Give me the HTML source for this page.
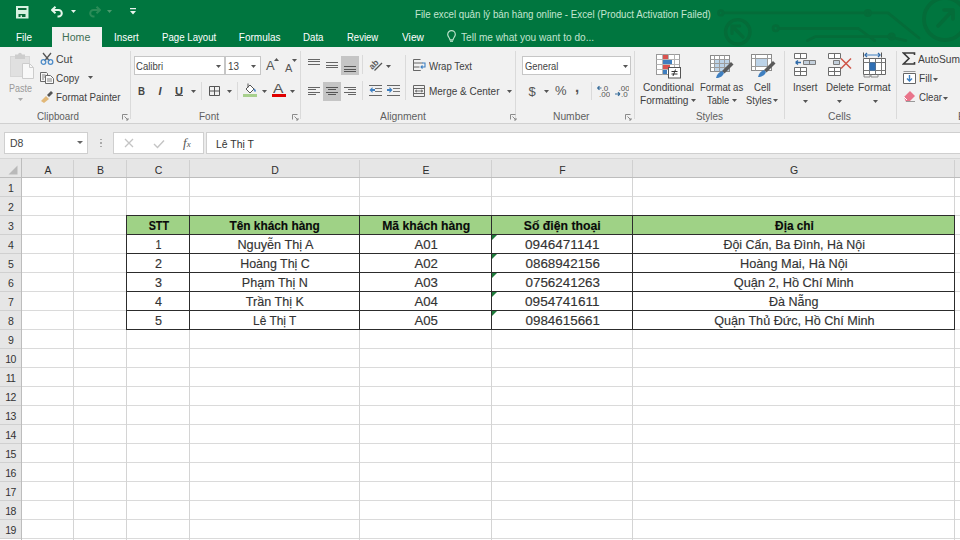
<!DOCTYPE html><html><head><meta charset="utf-8"><style>
*{box-sizing:border-box;margin:0;padding:0}
html,body{width:960px;height:540px;overflow:hidden;background:#fff;font-family:"Liberation Sans",sans-serif}
.a{position:absolute;white-space:nowrap}
#title{position:absolute;left:0;top:0;width:960px;height:47px;background:#00763f;overflow:hidden}
#ribbon{position:absolute;left:0;top:47px;width:960px;height:77px;background:#f1f1f1;border-bottom:1px solid #d0d0d0}
#gap{position:absolute;left:0;top:124px;width:960px;height:36px;background:#ebebeb}
.tab{position:absolute;top:30px;font-size:11.5px;color:#fff;white-space:nowrap}
.lbl{position:absolute;top:110px;font-size:11px;color:#666;white-space:nowrap}
.rt{position:absolute;font-size:11.5px;color:#333;white-space:nowrap}
.sep{position:absolute;top:52px;width:1px;height:68px;background:#dcdcdc}
.colh{position:absolute;top:159.5px;height:18px;font-size:10.5px;color:#2e2e2e;text-align:center;line-height:20px}
.rowh{position:absolute;left:0;width:21px;height:19px;background:#e6e6e6;font-size:10.5px;color:#333;text-align:center;line-height:21px;letter-spacing:-0.6px}
.hl{position:absolute;height:1px;background:#dadada}
.vl{position:absolute;width:1px;background:#d4d4d4}
.cell{position:absolute;height:19px;font-size:12.5px;color:#333;-webkit-text-stroke:0.15px currentColor;text-align:center;line-height:22px;white-space:nowrap}
</style></head><body>
<div id="title"></div><div id="ribbon"></div><div id="gap"></div>
<div class="a" style="left:52px;top:27px;width:50px;height:20px;background:#f1f1f1"></div>
<div class="a" style="left:16.2px;top:27.8px;height:20px;line-height:20px;font-size:10px;font-weight:normal;color:#ffffff;transform-origin:0 50%;transform:scaleX(0.992);">File</div>
<div class="a" style="left:62.2px;top:27.8px;height:20px;line-height:20px;font-size:10px;font-weight:normal;color:#3f6f55;transform-origin:0 50%;transform:scaleX(1.060);">Home</div>
<div class="a" style="left:113.5px;top:27.8px;height:20px;line-height:20px;font-size:10px;font-weight:normal;color:#ffffff;transform-origin:0 50%;transform:scaleX(0.987);">Insert</div>
<div class="a" style="left:161.5px;top:27.8px;height:20px;line-height:20px;font-size:10px;font-weight:normal;color:#ffffff;transform-origin:0 50%;transform:scaleX(0.967);">Page Layout</div>
<div class="a" style="left:238.8px;top:27.8px;height:20px;line-height:20px;font-size:10px;font-weight:normal;color:#ffffff;transform-origin:0 50%;transform:scaleX(1.000);">Formulas</div>
<div class="a" style="left:303.0px;top:27.8px;height:20px;line-height:20px;font-size:10px;font-weight:normal;color:#ffffff;transform-origin:0 50%;transform:scaleX(0.970);">Data</div>
<div class="a" style="left:347.3px;top:27.8px;height:20px;line-height:20px;font-size:10px;font-weight:normal;color:#ffffff;transform-origin:0 50%;transform:scaleX(0.951);">Review</div>
<div class="a" style="left:401.5px;top:27.8px;height:20px;line-height:20px;font-size:10px;font-weight:normal;color:#ffffff;transform-origin:0 50%;transform:scaleX(1.019);">View</div>
<div class="a" style="left:460.5px;top:27.8px;height:20px;line-height:20px;font-size:10px;font-weight:normal;color:#c0e4cf;transform-origin:0 50%;transform:scaleX(1.010);">Tell me what you want to do...</div>
<svg class="a" style="left:446px;top:29px" width="12" height="14" viewBox="0 0 12 14"><path d="M5.5 1.6a3.8 3.8 0 0 1 3.8 3.8c0 2-1.8 3.2-2.3 5.4h-3c-.5-2.2-2.3-3.4-2.3-5.4a3.8 3.8 0 0 1 3.8-3.8z" fill="none" stroke="#b9e2ca" stroke-width="1.2"/><path d="M4 12.2h3" stroke="#b9e2ca" stroke-width="1.3"/></svg>
<div class="a" style="left:414.5px;top:4.8px;height:20px;line-height:20px;font-size:10px;font-weight:normal;color:#c4e6d1;transform-origin:0 50%;transform:scaleX(0.973);">File excel quản lý bán hàng online - Excel (Product Activation Failed)</div>
<svg class="a" style="left:16px;top:6px" width="13" height="13" viewBox="0 0 13 13"><rect x="0" y="0" width="12.5" height="12.5" fill="#d8f2e2"/><rect x="2" y="2" width="8.5" height="2" fill="#0a6a3a"/><rect x="2.5" y="8" width="7" height="3" fill="#0a6a3a"/><rect x="4.5" y="9.3" width="1.5" height="1.7" fill="#d8f2e2"/></svg>
<svg class="a" style="left:50px;top:5px" width="16" height="14" viewBox="0 0 16 14"><path d="M5.5 1.8L2 5l3.5 3.2" fill="none" stroke="#e6f7ec" stroke-width="2" stroke-linejoin="round"/><path d="M2.5 5H8.5A3.3 3.3 0 0 1 8.5 11.6H7.5" fill="none" stroke="#e6f7ec" stroke-width="2"/></svg>
<svg class="a" style="left:71px;top:10px" width="5" height="3"><path d="M0 0h5L2.5 3z" fill="#e8f3ec"/></svg>
<svg class="a" style="left:86px;top:5px" width="16" height="14" viewBox="0 0 16 14"><path d="M10.5 1.8L14 5l-3.5 3.2" fill="none" stroke="#2b8c58" stroke-width="2" stroke-linejoin="round"/><path d="M13.5 5H7.5A3.3 3.3 0 0 0 7.5 11.6H8.5" fill="none" stroke="#2b8c58" stroke-width="2"/></svg>
<svg class="a" style="left:107px;top:10px" width="5" height="3"><path d="M0 0h5L2.5 3z" fill="#4d9a6e"/></svg>
<svg class="a" style="left:130px;top:8px" width="6" height="7"><path d="M0 0h6v1.2H0z M0 3h6L3 6.5z" fill="#e8f3ec"/></svg>
<svg class="a" style="left:700px;top:0" width="260" height="47" viewBox="0 0 260 47"><g fill="none" stroke="#046c39" stroke-width="2.8" stroke-linecap="round" stroke-linejoin="round">
<path d="M23 12.9H188L219 38"/><circle cx="20.8" cy="12.9" r="2.3"/><circle cx="167.9" cy="12.9" r="2.6"/>
<path d="M78.5 28.5H158.4L174.7 40.6"/><circle cx="75.7" cy="28.3" r="2.6"/>
<path d="M107.5 40.6L115.6 36.6H188.6L205.8 40.6"/><circle cx="191.6" cy="36.6" r="2.6"/>
<circle cx="37.8" cy="31.8" r="12.2" stroke-width="3.4"/><path d="M43 37L32 26M32 26v7.5M32 26h7.5" stroke-width="3.2"/>
<circle cx="245" cy="19" r="21" stroke-width="3.8"/><path d="M238 26L253 10M253 10h-9M253 10v9" stroke-width="3.6"/>
</g></svg>
<div class="a" style="left:130px;top:51px;width:1px;height:68px;background:#dadada"></div>
<div class="a" style="left:300px;top:51px;width:1px;height:68px;background:#dadada"></div>
<div class="a" style="left:515px;top:51px;width:1px;height:68px;background:#dadada"></div>
<div class="a" style="left:634px;top:51px;width:1px;height:68px;background:#dadada"></div>
<div class="a" style="left:784px;top:51px;width:1px;height:68px;background:#dadada"></div>
<div class="a" style="left:896px;top:51px;width:1px;height:68px;background:#dadada"></div>
<div class="a" style="left:37.3px;top:106.4px;height:20px;line-height:20px;font-size:11px;font-weight:normal;color:#5f5f5f;transform-origin:0 50%;transform:scaleX(0.892);">Clipboard</div>
<div class="a" style="left:199.1px;top:106.4px;height:20px;line-height:20px;font-size:11px;font-weight:normal;color:#5f5f5f;transform-origin:0 50%;transform:scaleX(0.908);">Font</div>
<div class="a" style="left:379.5px;top:106.4px;height:20px;line-height:20px;font-size:11px;font-weight:normal;color:#5f5f5f;transform-origin:0 50%;transform:scaleX(0.940);">Alignment</div>
<div class="a" style="left:552.5px;top:106.4px;height:20px;line-height:20px;font-size:11px;font-weight:normal;color:#5f5f5f;transform-origin:0 50%;transform:scaleX(0.933);">Number</div>
<div class="a" style="left:695.5px;top:106.4px;height:20px;line-height:20px;font-size:11px;font-weight:normal;color:#5f5f5f;transform-origin:0 50%;transform:scaleX(0.901);">Styles</div>
<div class="a" style="left:827.5px;top:106.4px;height:20px;line-height:20px;font-size:11px;font-weight:normal;color:#5f5f5f;transform-origin:0 50%;transform:scaleX(0.941);">Cells</div>
<div class="a" style="left:957.5px;top:106.4px;height:20px;line-height:20px;font-size:11px;font-weight:normal;color:#5f5f5f;transform-origin:0 50%;transform:scaleX(0.981);">Editing</div>
<svg class="a" style="left:121.5px;top:113.5px" width="7" height="7"><path d="M0.5 5.5V0.5H5.5" fill="none" stroke="#8a8a8a" stroke-width="1"/><path d="M2.5 2.5L6 6M4 6h2V4" fill="none" stroke="#8a8a8a" stroke-width="1"/></svg>
<svg class="a" style="left:291.5px;top:113.5px" width="7" height="7"><path d="M0.5 5.5V0.5H5.5" fill="none" stroke="#8a8a8a" stroke-width="1"/><path d="M2.5 2.5L6 6M4 6h2V4" fill="none" stroke="#8a8a8a" stroke-width="1"/></svg>
<svg class="a" style="left:509.5px;top:113.5px" width="7" height="7"><path d="M0.5 5.5V0.5H5.5" fill="none" stroke="#8a8a8a" stroke-width="1"/><path d="M2.5 2.5L6 6M4 6h2V4" fill="none" stroke="#8a8a8a" stroke-width="1"/></svg>
<svg class="a" style="left:624.5px;top:113.5px" width="7" height="7"><path d="M0.5 5.5V0.5H5.5" fill="none" stroke="#8a8a8a" stroke-width="1"/><path d="M2.5 2.5L6 6M4 6h2V4" fill="none" stroke="#8a8a8a" stroke-width="1"/></svg>
<div class="a" style="left:56.0px;top:49.1px;height:20px;line-height:20px;font-size:11px;font-weight:normal;color:#404040;transform-origin:0 50%;transform:scaleX(0.952);">Cut</div>
<div class="a" style="left:56.0px;top:67.8px;height:20px;line-height:20px;font-size:11px;font-weight:normal;color:#404040;transform-origin:0 50%;transform:scaleX(0.907);">Copy</div>
<div class="a" style="left:56.0px;top:86.8px;height:20px;line-height:20px;font-size:11px;font-weight:normal;color:#404040;transform-origin:0 50%;transform:scaleX(0.887);">Format Painter</div>
<div class="a" style="left:9.2px;top:77.5px;height:20px;line-height:20px;font-size:11px;font-weight:normal;color:#9a9a9a;transform-origin:0 50%;transform:scaleX(0.817);">Paste</div>
<svg class="a" style="left:18px;top:98px" width="5" height="3"><path d="M0 0h5L2.5 3z" fill="#aaa"/></svg>
<svg class="a" style="left:87.5px;top:76px" width="5" height="3"><path d="M0 0h5L2.5 3z" fill="#555"/></svg>
<svg class="a" style="left:9px;top:52px" width="27" height="28" viewBox="0 0 27 28"><rect x="1.5" y="4.5" width="19" height="20" fill="#e0e0e0" stroke="#d6d6d6"/><rect x="6" y="2.5" width="10" height="4.5" fill="#cdcdcd"/><circle cx="11" cy="2.5" r="1.8" fill="#cdcdcd"/><path d="M13.5 11.5h7l4 4v11h-11z" fill="#f8f8f8" stroke="#cccccc"/><path d="M20.5 11.5v4h4" fill="none" stroke="#cccccc"/></svg>
<svg class="a" style="left:40px;top:52px" width="14" height="13" viewBox="0 0 14 13"><path d="M3 1l6.5 8M11 1L4.5 9" stroke="#555" stroke-width="1.3"/><circle cx="3.5" cy="10" r="2.3" fill="none" stroke="#4f8dc9" stroke-width="1.3"/><circle cx="10.5" cy="10" r="2.3" fill="none" stroke="#4f8dc9" stroke-width="1.3"/></svg>
<svg class="a" style="left:40px;top:72px" width="14" height="12" viewBox="0 0 14 12"><path d="M0.5 0.5h6l1 1v8h-7z" fill="#f6f6f6" stroke="#6a6a6a"/><path d="M2 3h3.5M2 5h3.5M2 7h2" stroke="#777" stroke-width=".9"/><path d="M5.5 3.5h5l3 3v5h-8z" fill="#fafafa" stroke="#6a6a6a"/><path d="M7 7h5M7 9h5" stroke="#777" stroke-width=".9"/></svg>
<svg class="a" style="left:40px;top:90px" width="14" height="13" viewBox="0 0 14 13"><path d="M1 11l5-5 3 3-5 4z" fill="#e2b878"/><path d="M7 5l4-4 2 2-4 4z" fill="#555"/></svg>
<div class="a" style="left:134px;top:56px;width:91px;height:19px;background:#fff;border:1px solid #c6c6c6"></div>
<div class="a" style="left:225px;top:56px;width:36px;height:19px;background:#fff;border:1px solid #c6c6c6"></div>
<div class="a" style="left:136.0px;top:55.8px;height:20px;line-height:20px;font-size:11px;font-weight:normal;color:#444;transform-origin:0 50%;transform:scaleX(0.866);">Calibri</div>
<div class="a" style="left:227.5px;top:55.8px;height:20px;line-height:20px;font-size:11px;font-weight:normal;color:#444;transform-origin:0 50%;transform:scaleX(0.898);">13</div>
<svg class="a" style="left:215.5px;top:65px" width="5" height="3"><path d="M0 0h5L2.5 3z" fill="#555"/></svg>
<svg class="a" style="left:251px;top:65px" width="5" height="3"><path d="M0 0h5L2.5 3z" fill="#555"/></svg>
<div class="a" style="left:266px;top:56px;font-size:13px;color:#555;line-height:20px">A</div>
<svg class="a" style="left:274px;top:58px" width="5" height="3"><path d="M0 3h5L2.5 0z" fill="#555"/></svg>
<div class="a" style="left:285px;top:58px;font-size:11px;color:#555;line-height:20px">A</div>
<svg class="a" style="left:292px;top:59px" width="5" height="3"><path d="M0 0h5L2.5 3z" fill="#555"/></svg>
<div class="a" style="left:138.4px;top:80.5px;height:20px;line-height:20px;font-size:11px;font-weight:bold;color:#444;transform-origin:0 50%;transform:scaleX(0.880);">B</div>
<div class="a" style="left:158.5px;top:80.5px;font-size:11px;color:#444;line-height:20px;font-style:italic;font-weight:bold">I</div>
<div class="a" style="left:174.5px;top:80.5px;height:20px;line-height:20px;font-size:11px;font-weight:bold;color:#444;transform-origin:0 50%;transform:scaleX(1.006);">U</div>
<div class="a" style="left:175px;top:95px;width:7.5px;height:1px;background:#555"></div>
<svg class="a" style="left:191px;top:90px" width="5" height="3"><path d="M0 0h5L2.5 3z" fill="#555"/></svg>
<div class="a" style="left:201px;top:82px;width:1px;height:18px;background:#dadada"></div>
<svg class="a" style="left:209px;top:86px" width="11" height="10"><path d="M0.5 0.5h10v9h-10zM5.5 0.5v9M0.5 5h10" fill="none" stroke="#555" stroke-width="1"/></svg>
<svg class="a" style="left:226.5px;top:90px" width="5" height="3"><path d="M0 0h5L2.5 3z" fill="#555"/></svg>
<div class="a" style="left:237px;top:82px;width:1px;height:18px;background:#dadada"></div>
<svg class="a" style="left:243px;top:83px" width="14" height="14" viewBox="0 0 14 14"><path d="M3 6l4-4 4 4-4 4z" fill="#fff" stroke="#555" stroke-width="1"/><path d="M11 6l1.5 2.5" stroke="#4a86c8" stroke-width="1.5"/><path d="M5 0.5v4" stroke="#555"/><rect x="0" y="11" width="14" height="3" fill="#a8d08d"/></svg>
<svg class="a" style="left:262px;top:90px" width="5" height="3"><path d="M0 0h5L2.5 3z" fill="#555"/></svg>
<div class="a" style="left:272.5px;top:82px;font-size:12px;color:#555;line-height:14px;transform-origin:0 50%;transform:scaleX(1.3)">A</div>
<div class="a" style="left:271.5px;top:94.3px;width:14px;height:3px;background:#e00000"></div>
<svg class="a" style="left:290px;top:90px" width="5" height="3"><path d="M0 0h5L2.5 3z" fill="#555"/></svg>
<div class="a" style="left:308px;top:58.5px;width:12px;height:1px;background:#666"></div><div class="a" style="left:308px;top:61.0px;width:12px;height:1px;background:#666"></div><div class="a" style="left:308px;top:63.5px;width:12px;height:1px;background:#666"></div>
<div class="a" style="left:326px;top:62.0px;width:11.5px;height:1px;background:#666"></div><div class="a" style="left:326px;top:64.5px;width:11.5px;height:1px;background:#666"></div><div class="a" style="left:326px;top:67.0px;width:11.5px;height:1px;background:#666"></div>
<div class="a" style="left:341px;top:56px;width:18px;height:19px;background:#c5c5c5"></div>
<div class="a" style="left:344px;top:66.0px;width:12px;height:1px;background:#555"></div><div class="a" style="left:344px;top:68.7px;width:12px;height:1px;background:#555"></div><div class="a" style="left:344px;top:71.4px;width:12px;height:1px;background:#555"></div>
<div class="a" style="left:362px;top:55px;width:1px;height:19px;background:#dadada"></div>
<div class="a" style="left:362px;top:81px;width:1px;height:19px;background:#dadada"></div>
<div class="a" style="left:405px;top:55px;width:1px;height:45px;background:#dadada"></div>
<div class="a" style="left:308px;top:86.5px;width:12px;height:1px;background:#666"></div><div class="a" style="left:308px;top:89.0px;width:8px;height:1px;background:#666"></div><div class="a" style="left:308px;top:91.5px;width:12px;height:1px;background:#666"></div><div class="a" style="left:308px;top:94.0px;width:8px;height:1px;background:#666"></div>
<div class="a" style="left:323px;top:82px;width:18px;height:19px;background:#c5c5c5"></div>
<div class="a" style="left:326px;top:86.5px;width:12px;height:1px;background:#555"></div><div class="a" style="left:328px;top:89.0px;width:8px;height:1px;background:#555"></div><div class="a" style="left:326px;top:91.5px;width:12px;height:1px;background:#555"></div><div class="a" style="left:328px;top:94.0px;width:8px;height:1px;background:#555"></div>
<div class="a" style="left:344px;top:86.5px;width:12px;height:1px;background:#666"></div><div class="a" style="left:348px;top:89.0px;width:8px;height:1px;background:#666"></div><div class="a" style="left:344px;top:91.5px;width:12px;height:1px;background:#666"></div><div class="a" style="left:348px;top:94.0px;width:8px;height:1px;background:#666"></div>
<svg class="a" style="left:368px;top:57px" width="16" height="15" viewBox="0 0 16 15"><g transform="rotate(-45 6 7)"><text x="0.5" y="10" font-family="Liberation Sans" font-size="8.5" font-weight="bold" fill="#5a5a5a">ab</text></g><path d="M6.5 13.5L14 6" stroke="#555" stroke-width="1.3"/></svg>
<svg class="a" style="left:385.5px;top:65px" width="5" height="3"><path d="M0 0h5L2.5 3z" fill="#555"/></svg>
<div class="a" style="left:369px;top:85px;width:13px;height:1px;background:#666"></div>
<div class="a" style="left:375px;top:88px;width:7px;height:1px;background:#777"></div>
<div class="a" style="left:375px;top:91px;width:7px;height:1px;background:#777"></div>
<div class="a" style="left:369px;top:95px;width:13px;height:1px;background:#666"></div>
<svg class="a" style="left:369px;top:86px" width="6" height="8"><path d="M0.5 4L3.5 1V3H6V5H3.5V7z" fill="#3d7fc1"/></svg>
<div class="a" style="left:387px;top:85px;width:13px;height:1px;background:#666"></div>
<div class="a" style="left:393px;top:88px;width:7px;height:1px;background:#777"></div>
<div class="a" style="left:393px;top:91px;width:7px;height:1px;background:#777"></div>
<div class="a" style="left:387px;top:95px;width:13px;height:1px;background:#666"></div>
<svg class="a" style="left:387px;top:86px" width="6" height="8"><path d="M5.5 4L2.5 1V3H0V5H2.5V7z" fill="#3d7fc1"/></svg>
<svg class="a" style="left:412px;top:58px" width="15" height="13" viewBox="0 0 15 13"><path d="M1.5 1.5h7M1.5 1.5v11h7M1.5 5h9M1.5 9h6M1.5 12.5h7" fill="none" stroke="#666" stroke-width="1"/><path d="M10 5h3v4h-4M10.5 7.5L9 9l1.5 1.5" fill="none" stroke="#3d7fc1" stroke-width="1.1"/></svg>
<div class="a" style="left:428.5px;top:55.8px;height:20px;line-height:20px;font-size:11px;font-weight:normal;color:#404040;transform-origin:0 50%;transform:scaleX(0.875);">Wrap Text</div>
<svg class="a" style="left:412px;top:84px" width="14" height="13" viewBox="0 0 14 13"><path d="M1.5 1.5h11v11h-11zM1.5 4.5h11M1.5 9.5h11" fill="none" stroke="#666" stroke-width="1"/><path d="M3 7h8M3.5 7l1.5-1.2M3.5 7l1.5 1.2M10.5 7L9 5.8M10.5 7L9 8.2" stroke="#555" stroke-width=".8"/></svg>
<div class="a" style="left:428.5px;top:81.0px;height:20px;line-height:20px;font-size:11px;font-weight:normal;color:#404040;transform-origin:0 50%;transform:scaleX(0.908);">Merge &amp; Center</div>
<svg class="a" style="left:507px;top:90px" width="5" height="3"><path d="M0 0h5L2.5 3z" fill="#555"/></svg>
<div class="a" style="left:522px;top:56px;width:109px;height:19px;background:#fff;border:1px solid #c6c6c6"></div>
<div class="a" style="left:525.3px;top:55.8px;height:20px;line-height:20px;font-size:11px;font-weight:normal;color:#444;transform-origin:0 50%;transform:scaleX(0.851);">General</div>
<svg class="a" style="left:622.5px;top:65px" width="5" height="3"><path d="M0 0h5L2.5 3z" fill="#555"/></svg>
<div class="a" style="left:528.5px;top:83.5px;font-size:13px;color:#555;line-height:16px">$</div>
<svg class="a" style="left:543.5px;top:90px" width="5" height="3"><path d="M0 0h5L2.5 3z" fill="#555"/></svg>
<div class="a" style="left:555px;top:83px;font-size:13px;color:#555;line-height:16px">%</div>
<div class="a" style="left:575px;top:79px;font-size:15px;color:#555;line-height:16px;font-weight:bold">,</div>
<div class="a" style="left:590.5px;top:82px;width:1px;height:18px;background:#dadada"></div>
<svg class="a" style="left:596px;top:84px" width="14" height="14" viewBox="0 0 14 14"><text x="5.5" y="6.8" font-family="Liberation Sans" font-size="8" fill="#555">.0</text><text x="3" y="13" font-family="Liberation Sans" font-size="8" fill="#555">.00</text><path d="M1.5 4h4M1.5 4l2-1.8M1.5 4l2 1.8" stroke="#3a6f9c" stroke-width="1.2"/></svg>
<svg class="a" style="left:614px;top:84px" width="15" height="14" viewBox="0 0 15 14"><text x="4.5" y="6.8" font-family="Liberation Sans" font-size="8" fill="#555">.00</text><text x="7" y="13" font-family="Liberation Sans" font-size="8" fill="#555">.0</text><path d="M1 10h5M6 10l-2-1.8M6 10l-2 1.8" stroke="#3a6f9c" stroke-width="1.2"/></svg>
<svg class="a" style="left:655px;top:53px" width="27" height="26" viewBox="0 0 27 26"><g stroke="#9a9a9a" stroke-width="1" fill="#fff"><rect x="1.5" y="1.5" width="23" height="20"/></g>
<path d="M1.5 6.5h23M1.5 11.5h23M1.5 16.5h23M7.5 1.5v20M13.5 1.5v20M19.5 1.5v20" stroke="#b5b5b5" stroke-width="1"/>
<rect x="8" y="2" width="5" height="4" fill="#d9534f"/><rect x="8" y="7" width="9" height="4" fill="#3f7fc0"/><rect x="8" y="12" width="7" height="4" fill="#d9534f"/><rect x="8" y="17" width="4" height="4" fill="#3f7fc0"/>
<rect x="13.5" y="14.5" width="12" height="10.5" fill="#fff" stroke="#555"/><path d="M16.5 18.5h6M16.5 21h6M20.5 16.5l-2.5 6.5" stroke="#333" stroke-width="1"/></svg>
<div class="a" style="left:642.5px;top:77.3px;height:20px;line-height:20px;font-size:11px;font-weight:normal;color:#404040;transform-origin:0 50%;transform:scaleX(0.926);">Conditional</div>
<div class="a" style="left:640.2px;top:89.6px;height:20px;line-height:20px;font-size:11px;font-weight:normal;color:#404040;transform-origin:0 50%;transform:scaleX(0.922);">Formatting</div>
<svg class="a" style="left:690.5px;top:99px" width="5" height="3"><path d="M0 0h5L2.5 3z" fill="#555"/></svg>
<svg class="a" style="left:709px;top:54px" width="26" height="25" viewBox="0 0 26 25"><rect x="1.5" y="1.5" width="19" height="16" fill="#fff" stroke="#8a8a8a"/>
<rect x="6" y="5" width="14" height="12" fill="#bcd3e8"/><path d="M1.5 5.5h19M1.5 9.5h19M1.5 13.5h19M5.5 1.5v16M10.5 1.5v16M15.5 1.5v16" stroke="#9c9c9c" stroke-width="1"/>
<path d="M13 17l9-9 2.5 2.5-9 9z" fill="#5a5a5a"/><path d="M7 24c1-4 3-6 6-7l2 2c-1 3-4 5-8 5z" fill="#3f7fc0"/></svg>
<div class="a" style="left:699.5px;top:77.3px;height:20px;line-height:20px;font-size:11px;font-weight:normal;color:#404040;transform-origin:0 50%;transform:scaleX(0.872);">Format as</div>
<div class="a" style="left:706.5px;top:89.6px;height:20px;line-height:20px;font-size:11px;font-weight:normal;color:#404040;transform-origin:0 50%;transform:scaleX(0.844);">Table</div>
<svg class="a" style="left:731.5px;top:99px" width="5" height="3"><path d="M0 0h5L2.5 3z" fill="#555"/></svg>
<svg class="a" style="left:750px;top:53px" width="27" height="25" viewBox="0 0 27 25"><rect x="1.5" y="1.5" width="20" height="16" fill="#fff" stroke="#8a8a8a"/>
<rect x="5" y="5.5" width="13" height="8" fill="#bcd3e8"/><path d="M1.5 5.5h20M1.5 13.5h20M5.5 1.5v16M17.5 1.5v16" stroke="#9c9c9c" stroke-width="1"/>
<path d="M14 17l9-9 2.5 2.5-9 9z" fill="#5a5a5a"/><path d="M8 24c1-4 3-6 6-7l2 2c-1 3-4 5-8 5z" fill="#3f7fc0"/></svg>
<div class="a" style="left:753.8px;top:77.3px;height:20px;line-height:20px;font-size:11px;font-weight:normal;color:#404040;transform-origin:0 50%;transform:scaleX(0.881);">Cell</div>
<div class="a" style="left:746.1px;top:89.6px;height:20px;line-height:20px;font-size:11px;font-weight:normal;color:#404040;transform-origin:0 50%;transform:scaleX(0.854);">Styles</div>
<svg class="a" style="left:773px;top:99px" width="5" height="3"><path d="M0 0h5L2.5 3z" fill="#555"/></svg>
<svg class="a" style="left:794px;top:52px" width="23" height="25" viewBox="0 0 23 25"><g fill="#fff" stroke="#6e6e6e" stroke-width="1"><path d="M0.5 1.5h12v5h-12zM6.5 1.5v5"/><path d="M0.5 15.5h12v8h-12zM0.5 19.5h12M6.5 15.5v8"/></g>
<path d="M9.5 8.5h12v4h-12zM15.5 8.5v4" fill="#c4d0dc" stroke="#7a7a7a"/><path d="M2 10.5h5M1.5 10.5l2.5-2M1.5 10.5l2.5 2" stroke="#2f6aa8" stroke-width="1.4"/></svg>
<div class="a" style="left:792.5px;top:77.4px;height:20px;line-height:20px;font-size:11px;font-weight:normal;color:#404040;transform-origin:0 50%;transform:scaleX(0.890);">Insert</div>
<svg class="a" style="left:803px;top:99.5px" width="5" height="3"><path d="M0 0h5L2.5 3z" fill="#555"/></svg>
<svg class="a" style="left:828px;top:52px" width="25" height="25" viewBox="0 0 25 25"><g fill="#fff" stroke="#6e6e6e" stroke-width="1"><path d="M0.5 1.5h12v5h-12zM6.5 1.5v5"/><path d="M0.5 15.5h12v8h-12zM0.5 19.5h12M6.5 15.5v8"/></g>
<path d="M5.5 8.5h6v4h-6z" fill="#c4d0dc" stroke="#7a7a7a"/><path d="M13 6.5l10 10M23 6.5L13 16.5" stroke="#cf5648" stroke-width="1.5"/></svg>
<div class="a" style="left:825.5px;top:77.4px;height:20px;line-height:20px;font-size:11px;font-weight:normal;color:#404040;transform-origin:0 50%;transform:scaleX(0.881);">Delete</div>
<svg class="a" style="left:837px;top:99.5px" width="5" height="3"><path d="M0 0h5L2.5 3z" fill="#555"/></svg>
<svg class="a" style="left:862px;top:52px" width="26" height="27" viewBox="0 0 26 27"><path d="M1.5 0.5v5M19.5 0.5v5" stroke="#555" stroke-width="1"/><path d="M3 3h15" stroke="#3d7fc1" stroke-width="1"/><path d="M5 1l-2 2 2 2M16 1l2 2-2 2" fill="none" stroke="#2f6aa8" stroke-width="1.3"/>
<path d="M1.5 6.5h22v16h-22z" fill="#fff" stroke="#666"/><path d="M1.5 10.5h22M1.5 18.5h22M7.5 6.5v16M13.5 6.5v16M19.5 6.5v16" stroke="#777"/>
<rect x="7.5" y="10.5" width="6" height="8" fill="#2f6fb4"/><path d="M2 22.5v2.5h6v-2.5M9 22.5v2.5h7v-2.5" fill="none" stroke="#888"/></svg>
<div class="a" style="left:858.0px;top:77.4px;height:20px;line-height:20px;font-size:11px;font-weight:normal;color:#404040;transform-origin:0 50%;transform:scaleX(0.938);">Format</div>
<svg class="a" style="left:872.5px;top:99.5px" width="5" height="3"><path d="M0 0h5L2.5 3z" fill="#555"/></svg>
<svg class="a" style="left:902px;top:52px" width="14" height="13" viewBox="0 0 14 13"><path d="M12.5 3V1H1.5L7 6.5 1.5 12H12.5V10" fill="none" stroke="#3a3a3a" stroke-width="1.6"/></svg>
<div class="a" style="left:917.8px;top:49.4px;height:20px;line-height:20px;font-size:11px;font-weight:normal;color:#404040;transform-origin:0 50%;transform:scaleX(0.928);">AutoSum</div>
<svg class="a" style="left:903px;top:71px" width="13" height="13" viewBox="0 0 13 13"><path d="M0.5 2.5h12v10h-12z" fill="#fff" stroke="#666"/><path d="M0.5 0.5h12" stroke="#999"/><path d="M6.5 4v6M4 7.5l2.5 2.5 2.5-2.5" fill="none" stroke="#3d7fc1" stroke-width="1.4"/></svg>
<div class="a" style="left:918.5px;top:67.9px;height:20px;line-height:20px;font-size:11px;font-weight:normal;color:#404040;transform-origin:0 50%;transform:scaleX(0.924);">Fill</div>
<svg class="a" style="left:933px;top:77.5px" width="5" height="3"><path d="M0 0h5L2.5 3z" fill="#555"/></svg>
<svg class="a" style="left:903px;top:90px" width="13" height="12" viewBox="0 0 13 12"><path d="M1 7l6-6 5 5-6 6H3z" fill="#e9748a"/><path d="M1 7l3 3" stroke="#fff" stroke-width="1"/><path d="M3 11.5h9" stroke="#999"/></svg>
<div class="a" style="left:918.5px;top:87.0px;height:20px;line-height:20px;font-size:11px;font-weight:normal;color:#404040;transform-origin:0 50%;transform:scaleX(0.875);">Clear</div>
<svg class="a" style="left:943px;top:96.5px" width="5" height="3"><path d="M0 0h5L2.5 3z" fill="#555"/></svg>
<div class="a" style="left:4px;top:132px;width:84px;height:22px;background:#fff;border:1px solid #cfcfcf"></div>
<div class="a" style="left:10.0px;top:133.2px;height:20px;line-height:20px;font-size:11.5px;font-weight:normal;color:#444;transform-origin:0 50%;transform:scaleX(0.911);">D8</div>
<svg class="a" style="left:77px;top:141px" width="6" height="3"><path d="M0 0h6L3 3z" fill="#666"/></svg>
<div class="a" style="left:100px;top:138.5px;width:1.5px;height:1.5px;background:#aaa"></div>
<div class="a" style="left:100px;top:142px;width:1.5px;height:1.5px;background:#aaa"></div>
<div class="a" style="left:100px;top:145.5px;width:1.5px;height:1.5px;background:#aaa"></div>
<div class="a" style="left:113px;top:132px;width:91px;height:22px;background:#fff;border:1px solid #cfcfcf"></div>
<svg class="a" style="left:124px;top:138px" width="10" height="10"><path d="M1 1l8 8M9 1L1 9" stroke="#c4c4c4" stroke-width="1.3"/></svg>
<svg class="a" style="left:153px;top:139px" width="12" height="10"><path d="M1 5l3.5 3.5L11 1.5" fill="none" stroke="#c4c4c4" stroke-width="1.4"/></svg>
<div class="a" style="left:183px;top:135px;font-family:'Liberation Serif';font-style:italic;font-size:13px;color:#555;line-height:16px">f<span style="font-size:9px">x</span></div>
<div class="a" style="left:206px;top:132px;width:760px;height:22px;background:#fff;border:1px solid #cfcfcf"></div>
<div class="a" style="left:216.2px;top:133.5px;height:20px;line-height:20px;font-size:11.5px;font-weight:normal;color:#333;transform-origin:0 50%;transform:scaleX(0.909);">Lê Thị T</div>
<div class="a" style="left:0;top:158px;width:960px;height:19px;background:#e6e6e6;border-top:1px solid #d6d6d6"></div>
<div class="colh" style="left:22px;width:52px">A</div>
<div class="colh" style="left:74px;width:53px">B</div>
<div class="colh" style="left:127px;width:63px">C</div>
<div class="colh" style="left:190px;width:170px">D</div>
<div class="colh" style="left:360px;width:132px">E</div>
<div class="colh" style="left:492px;width:141px">F</div>
<div class="colh" style="left:633px;width:322px">G</div>
<div class="a" style="left:0;top:177px;width:960px;height:1px;background:#bdbdbd"></div>
<div class="a" style="left:21px;top:158px;width:1px;height:382px;background:#bdbdbd"></div>
<div class="rowh" style="top:178px">1</div>
<div class="hl" style="left:22px;top:196px;width:938px"></div>
<div class="a" style="left:0;top:196px;width:21px;height:1px;background:#d0d0d0"></div>
<div class="rowh" style="top:197px">2</div>
<div class="hl" style="left:22px;top:215px;width:938px"></div>
<div class="a" style="left:0;top:215px;width:21px;height:1px;background:#d0d0d0"></div>
<div class="rowh" style="top:216px">3</div>
<div class="hl" style="left:22px;top:234px;width:938px"></div>
<div class="a" style="left:0;top:234px;width:21px;height:1px;background:#d0d0d0"></div>
<div class="rowh" style="top:235px">4</div>
<div class="hl" style="left:22px;top:253px;width:938px"></div>
<div class="a" style="left:0;top:253px;width:21px;height:1px;background:#d0d0d0"></div>
<div class="rowh" style="top:254px">5</div>
<div class="hl" style="left:22px;top:272px;width:938px"></div>
<div class="a" style="left:0;top:272px;width:21px;height:1px;background:#d0d0d0"></div>
<div class="rowh" style="top:273px">6</div>
<div class="hl" style="left:22px;top:291px;width:938px"></div>
<div class="a" style="left:0;top:291px;width:21px;height:1px;background:#d0d0d0"></div>
<div class="rowh" style="top:292px">7</div>
<div class="hl" style="left:22px;top:310px;width:938px"></div>
<div class="a" style="left:0;top:310px;width:21px;height:1px;background:#d0d0d0"></div>
<div class="rowh" style="top:311px">8</div>
<div class="hl" style="left:22px;top:329px;width:938px"></div>
<div class="a" style="left:0;top:329px;width:21px;height:1px;background:#d0d0d0"></div>
<div class="rowh" style="top:330px">9</div>
<div class="hl" style="left:22px;top:348px;width:938px"></div>
<div class="a" style="left:0;top:348px;width:21px;height:1px;background:#d0d0d0"></div>
<div class="rowh" style="top:349px">10</div>
<div class="hl" style="left:22px;top:367px;width:938px"></div>
<div class="a" style="left:0;top:367px;width:21px;height:1px;background:#d0d0d0"></div>
<div class="rowh" style="top:368px">11</div>
<div class="hl" style="left:22px;top:386px;width:938px"></div>
<div class="a" style="left:0;top:386px;width:21px;height:1px;background:#d0d0d0"></div>
<div class="rowh" style="top:387px">12</div>
<div class="hl" style="left:22px;top:405px;width:938px"></div>
<div class="a" style="left:0;top:405px;width:21px;height:1px;background:#d0d0d0"></div>
<div class="rowh" style="top:406px">13</div>
<div class="hl" style="left:22px;top:424px;width:938px"></div>
<div class="a" style="left:0;top:424px;width:21px;height:1px;background:#d0d0d0"></div>
<div class="rowh" style="top:425px">14</div>
<div class="hl" style="left:22px;top:443px;width:938px"></div>
<div class="a" style="left:0;top:443px;width:21px;height:1px;background:#d0d0d0"></div>
<div class="rowh" style="top:444px">15</div>
<div class="hl" style="left:22px;top:462px;width:938px"></div>
<div class="a" style="left:0;top:462px;width:21px;height:1px;background:#d0d0d0"></div>
<div class="rowh" style="top:463px">16</div>
<div class="hl" style="left:22px;top:481px;width:938px"></div>
<div class="a" style="left:0;top:481px;width:21px;height:1px;background:#d0d0d0"></div>
<div class="rowh" style="top:482px">17</div>
<div class="hl" style="left:22px;top:500px;width:938px"></div>
<div class="a" style="left:0;top:500px;width:21px;height:1px;background:#d0d0d0"></div>
<div class="rowh" style="top:501px">18</div>
<div class="hl" style="left:22px;top:519px;width:938px"></div>
<div class="a" style="left:0;top:519px;width:21px;height:1px;background:#d0d0d0"></div>
<div class="rowh" style="top:520px">19</div>
<div class="hl" style="left:22px;top:538px;width:938px"></div>
<div class="a" style="left:0;top:538px;width:21px;height:1px;background:#d0d0d0"></div>
<div class="vl" style="left:73px;top:178px;height:362px"></div>
<div class="a" style="left:73px;top:160px;width:1px;height:17px;background:#d0d0d0"></div>
<div class="vl" style="left:126px;top:178px;height:362px"></div>
<div class="a" style="left:126px;top:160px;width:1px;height:17px;background:#d0d0d0"></div>
<div class="vl" style="left:189px;top:178px;height:362px"></div>
<div class="a" style="left:189px;top:160px;width:1px;height:17px;background:#d0d0d0"></div>
<div class="vl" style="left:359px;top:178px;height:362px"></div>
<div class="a" style="left:359px;top:160px;width:1px;height:17px;background:#d0d0d0"></div>
<div class="vl" style="left:491px;top:178px;height:362px"></div>
<div class="a" style="left:491px;top:160px;width:1px;height:17px;background:#d0d0d0"></div>
<div class="vl" style="left:632px;top:178px;height:362px"></div>
<div class="a" style="left:632px;top:160px;width:1px;height:17px;background:#d0d0d0"></div>
<div class="vl" style="left:954px;top:178px;height:362px"></div>
<div class="a" style="left:954px;top:160px;width:1px;height:17px;background:#d0d0d0"></div>
<svg class="a" style="left:0;top:158px" width="21" height="19"><polygon points="17.5,7.5 17.5,16.5 8.5,16.5" fill="#b9b9b9"/></svg>
<div class="a" style="left:126px;top:215px;width:829px;height:19px;background:#9fd286"></div>
<div class="cell" style="left:127px;top:215px;width:63px;font-weight:bold;color:#0a0a0a;line-height:23px"><span style="display:inline-block;transform:scaleX(0.860)">STT</span></div>
<div class="cell" style="left:190px;top:215px;width:170px;font-weight:bold;color:#0a0a0a;line-height:23px"><span style="display:inline-block;transform:scaleX(0.950)">Tên khách hàng</span></div>
<div class="cell" style="left:360px;top:215px;width:132px;font-weight:bold;color:#0a0a0a;line-height:23px"><span style="display:inline-block;transform:scaleX(0.975)">Mã khách hàng</span></div>
<div class="cell" style="left:492px;top:215px;width:141px;font-weight:bold;color:#0a0a0a;line-height:23px"><span style="display:inline-block;transform:scaleX(0.979)">Số điện thoại</span></div>
<div class="cell" style="left:633px;top:215px;width:322px;font-weight:bold;color:#0a0a0a;line-height:23px"><span style="display:inline-block;transform:scaleX(0.946)">Địa chỉ</span></div>
<div class="cell" style="left:127px;top:234px;width:63px;"><span style="display:inline-block;transform:scaleX(0.863)">1</span></div>
<div class="cell" style="left:190px;top:234px;width:170px;"><span style="display:inline-block;transform:scaleX(1.016)">Nguyễn Thị A</span></div>
<div class="cell" style="left:360px;top:234px;width:132px;"><span style="display:inline-block;transform:scaleX(1.056)">A01</span></div>
<div class="cell" style="left:492px;top:234px;width:141px;"><span style="display:inline-block;transform:scaleX(1.086)">0946471141</span></div>
<div class="cell" style="left:633px;top:234px;width:322px;"><span style="display:inline-block;transform:scaleX(0.994)">Đội Cấn, Ba Đình, Hà Nội</span></div>
<div class="cell" style="left:127px;top:253px;width:63px;"><span style="display:inline-block;transform:scaleX(1.007)">2</span></div>
<div class="cell" style="left:190px;top:253px;width:170px;"><span style="display:inline-block;transform:scaleX(0.994)">Hoàng Thị C</span></div>
<div class="cell" style="left:360px;top:253px;width:132px;"><span style="display:inline-block;transform:scaleX(1.056)">A02</span></div>
<div class="cell" style="left:492px;top:253px;width:141px;"><span style="display:inline-block;transform:scaleX(1.071)">0868942156</span></div>
<div class="cell" style="left:633px;top:253px;width:322px;"><span style="display:inline-block;transform:scaleX(1.020)">Hoàng Mai, Hà Nội</span></div>
<div class="cell" style="left:127px;top:272px;width:63px;"><span style="display:inline-block;transform:scaleX(1.007)">3</span></div>
<div class="cell" style="left:190px;top:272px;width:170px;"><span style="display:inline-block;transform:scaleX(1.004)">Phạm Thị N</span></div>
<div class="cell" style="left:360px;top:272px;width:132px;"><span style="display:inline-block;transform:scaleX(1.056)">A03</span></div>
<div class="cell" style="left:492px;top:272px;width:141px;"><span style="display:inline-block;transform:scaleX(1.071)">0756241263</span></div>
<div class="cell" style="left:633px;top:272px;width:322px;"><span style="display:inline-block;transform:scaleX(1.022)">Quận 2, Hồ Chí Minh</span></div>
<div class="cell" style="left:127px;top:291px;width:63px;"><span style="display:inline-block;transform:scaleX(1.007)">4</span></div>
<div class="cell" style="left:190px;top:291px;width:170px;"><span style="display:inline-block;transform:scaleX(1.006)">Trần Thị K</span></div>
<div class="cell" style="left:360px;top:291px;width:132px;"><span style="display:inline-block;transform:scaleX(1.056)">A04</span></div>
<div class="cell" style="left:492px;top:291px;width:141px;"><span style="display:inline-block;transform:scaleX(1.086)">0954741611</span></div>
<div class="cell" style="left:633px;top:291px;width:322px;"><span style="display:inline-block;transform:scaleX(1.001)">Đà Nẵng</span></div>
<div class="cell" style="left:127px;top:310px;width:63px;"><span style="display:inline-block;transform:scaleX(1.007)">5</span></div>
<div class="cell" style="left:190px;top:310px;width:170px;"><span style="display:inline-block;transform:scaleX(0.951)">Lê Thị T</span></div>
<div class="cell" style="left:360px;top:310px;width:132px;"><span style="display:inline-block;transform:scaleX(1.056)">A05</span></div>
<div class="cell" style="left:492px;top:310px;width:141px;"><span style="display:inline-block;transform:scaleX(1.071)">0984615661</span></div>
<div class="cell" style="left:633px;top:310px;width:322px;"><span style="display:inline-block;transform:scaleX(1.009)">Quận Thủ Đức, Hồ Chí Minh</span></div>
<div class="a" style="left:126px;top:215px;width:829px;height:1px;background:#2c2c2c"></div>
<div class="a" style="left:126px;top:234px;width:829px;height:1px;background:#2c2c2c"></div>
<div class="a" style="left:126px;top:253px;width:829px;height:1px;background:#2c2c2c"></div>
<div class="a" style="left:126px;top:272px;width:829px;height:1px;background:#2c2c2c"></div>
<div class="a" style="left:126px;top:291px;width:829px;height:1px;background:#2c2c2c"></div>
<div class="a" style="left:126px;top:310px;width:829px;height:1px;background:#2c2c2c"></div>
<div class="a" style="left:126px;top:329px;width:829px;height:1px;background:#2c2c2c"></div>
<div class="a" style="left:126px;top:215px;width:1px;height:115px;background:#2c2c2c"></div>
<div class="a" style="left:189px;top:215px;width:1px;height:115px;background:#2c2c2c"></div>
<div class="a" style="left:359px;top:215px;width:1px;height:115px;background:#2c2c2c"></div>
<div class="a" style="left:491px;top:215px;width:1px;height:115px;background:#2c2c2c"></div>
<div class="a" style="left:632px;top:215px;width:1px;height:115px;background:#2c2c2c"></div>
<div class="a" style="left:954px;top:215px;width:1px;height:115px;background:#2c2c2c"></div>
<svg class="a" style="left:492px;top:235px" width="6" height="6"><polygon points="0,0 5,0 0,5" fill="#1e7b3a"/></svg>
<svg class="a" style="left:492px;top:254px" width="6" height="6"><polygon points="0,0 5,0 0,5" fill="#1e7b3a"/></svg>
<svg class="a" style="left:492px;top:273px" width="6" height="6"><polygon points="0,0 5,0 0,5" fill="#1e7b3a"/></svg>
<svg class="a" style="left:492px;top:292px" width="6" height="6"><polygon points="0,0 5,0 0,5" fill="#1e7b3a"/></svg>
<svg class="a" style="left:492px;top:311px" width="6" height="6"><polygon points="0,0 5,0 0,5" fill="#1e7b3a"/></svg>
</body></html>
